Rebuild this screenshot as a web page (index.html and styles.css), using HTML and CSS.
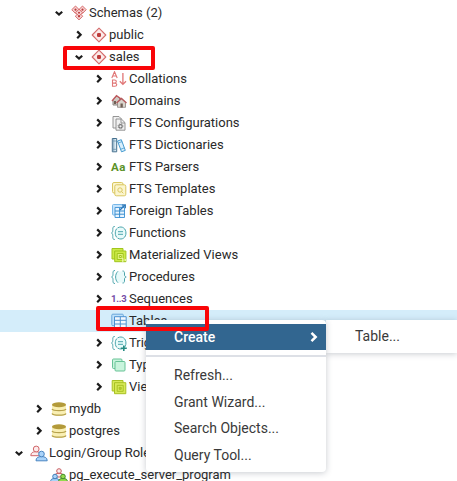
FILE: index.html
```html
<!DOCTYPE html>
<html lang="en">
<head>
<meta charset="utf-8">
<title>Object browser</title>
<link rel="stylesheet" href="styles.css">
</head>
<body>
<svg class="defs" aria-hidden="true">
  <symbol id="open" viewBox="0 0 10 16"><path d="M1.800 6.700 5 9.600l3.200-2.900" fill="none" stroke="#1c1c1c" stroke-width="2.200"/></symbol>
  <symbol id="closed" viewBox="0 0 10 16"><path d="M3.200 4.400 6.600 7.800l-3.400 3.400" fill="none" stroke="#1c1c1c" stroke-width="2.200"/></symbol>
  <symbol id="schemas" viewBox="0 0 16 16"><g fill="#f6d5d5" stroke="#d45c5c" stroke-width=".9"><path d="M4.500 1 8.200 4.700 4.500 8.400.8 4.700zM11.500 1l3.700 3.700-3.700 3.700-3.700-3.700zM8 7.500l3.700 3.700L8 14.900l-3.700-3.700z"/><path d="M8 4.200 11.500 7.700 8 11.200 4.500 7.700z"/></g><g fill="#bd3b3b"><circle cx="4.500" cy="4.700" r="1.100"/><circle cx="11.500" cy="4.700" r="1.100"/><circle cx="8" cy="7.700" r="1"/><circle cx="8" cy="11.300" r="1.100"/></g></symbol>
  <symbol id="schema" viewBox="0 0 16 16"><path d="M8 1.200 14.800 8 8 14.800 1.200 8z" fill="#fbe9e8" stroke="#d46b6b" stroke-width="1.100" stroke-linejoin="round"/><rect x="6" y="6" width="4" height="4" rx="1.200" fill="#bd3b3b"/></symbol>
  <symbol id="collation" viewBox="0 0 16 16"><g fill="none" stroke="#e07676" stroke-width="1.100"><path d="M.8 7 3.500.7 6.200 7M1.700 5h3.600M1.500 9v6.300h2.300c2.600 0 2.600-3.200 0-3.200H1.500h2.100c2.300 0 2.300-3.100 0-3.100z"/><path d="M11.900 2v11.300M8.800 10.200l3.100 3.200 3.100-3.200" stroke-width="1.300"/></g></symbol>
  <symbol id="domain" viewBox="0 0 16 16"><path d="M2 7v5h7V6L6 3z" fill="#cfcac4" stroke="#8b8580"/><path d="M1 8 5.500 2.600 11 6.500" fill="none" stroke="#c05a5e" stroke-width="1.400"/><path d="M6.500 9.300v5h8v-5l-4-3.500z" fill="#d9d4cd" stroke="#8b8580" stroke-width=".8"/><path d="m5.500 10 5-4.600 5 4.600" fill="none" stroke="#b65a5d" stroke-width="1.400"/><path d="M3 8h2v3H3zM9.500 10.500h2.300v4H9.500z" fill="#705f55"/></symbol>
  <symbol id="config" viewBox="0 0 16 16"><g fill="#f1f1f1" stroke="#8a8a8a" stroke-width=".9"><path d="M5 13H2V1.500h6l2 2V5"/><path d="M5 4h5.400L14 7.600v7.600H5z"/><path d="M10 4v4h4" fill="none"/></g><circle cx="9.500" cy="11.300" r="1.700" fill="none" stroke="#777" stroke-width="1.100"/><circle cx="9.500" cy="11.300" r="2.500" fill="none" stroke="#777" stroke-width=".8" stroke-dasharray="1 .96"/></symbol>
  <symbol id="dictionary" viewBox="0 0 16 16"><path d="M1.300 1.500h4.400v13.300H1.300z" fill="#dcebf4" stroke="#456f8d"/><path d="M1.300 4h4.400M1.300 12.300h4.400M2.800 2v12.500" stroke="#6b93ad" stroke-width=".8"/><path d="m6.500 4 3.800-1.300 4 10.700-3.800 1.400z" fill="#d9effc" stroke="#459bd0"/><path d="m7.300 6 3.800-1.400m-1.500 7.700 3.800-1.400" stroke="#459bd0" stroke-width=".8"/></symbol>
  <symbol id="template" viewBox="0 0 16 16"><g fill="#fbf5ce" stroke="#dac760"><rect x="1.500" y="1.500" width="10.500" height="10.500" rx="1.500"/><rect x="3.800" y="3.800" width="11" height="11" rx="1.500"/><circle cx="9" cy="9" r="2.200"/><path d="m10.600 10.600 1.700 1.700"/></g></symbol>
  <symbol id="foreign" viewBox="0 0 16 16"><rect x="1.500" y="1.500" width="10" height="10.500" rx="1" fill="#c6e4fc" stroke="#77b8e9"/><path d="M4 4.500h9.500v10H4z" fill="#e9f5ff" stroke="#4c9ad8"/><path d="M4 8h9.500M4 11.200h9.500M8.600 5v9.500" stroke="#398dcd"/><path d="M9 7 14 2M10.800 1.800h3.500v3.500" fill="none" stroke="#2f79b8" stroke-width="1.300"/></symbol>
  <symbol id="braces" viewBox="0 0 16 16"><path d="M6.500 2.500h6.300V8v5.500H6.500C4 11 4 5 6.500 2.500z" fill="#e8fafa"/><g fill="none" stroke="#4aa5ac"><path d="M4 1.500c-2 0-2 1-2 3S2 7.300.6 8C2 8.700 2 9.500 2 11.500s0 3 2 3M7 2.300c-3.200 2.800-3.200 8.600 0 11.400"/><path d="M11.500 2c2 0 2 1 2 3s0 2.300 1.700 3c-1.700.7-1.700 1-1.700 3s0 3-2 3"/></g></symbol>
  <symbol id="function" viewBox="0 0 16 16"><circle cx="9.500" cy="8" r="5.700" fill="#e8fafa"/><g fill="none" stroke="#4aa5ac"><path d="M3.800 1.500c-2 0-2 1-2 3S1.800 7.300.5 8c1.300.7 1.300 1.500 1.300 3.500s0 3 2 3M6.500 3C3.500 5 3.500 11 6.500 13M12.700 3c3 2 3 8 0 10"/><path d="M7 2.700c2-1 4-1 5.700.3M7 13.300c2 1 4 1 5.700-.3M7 6.700h5M7 9.300h5"/></g></symbol>
  <symbol id="trigger" viewBox="0 0 16 16"><use href="#function"/><path d="M9.800 13.300h6M12.800 10.500v5.500" stroke="#258b82" stroke-width="1.600"/></symbol>
  <symbol id="matview" viewBox="0 0 16 16"><g fill="#ccea48" stroke="#a1c51c"><path d="M1 1.500h11V12H1z"/><path d="M3.700 4h11.200v10.700H3.700z"/><path d="M6.200 6.500h6v6h-6z" fill="#e2f47d"/><path d="M8.300 8.500h2v2h-2z" fill="#f0f8ad"/></g><path d="M11.800 11v4M14.300 12v2" stroke="#f3f9c6"/></symbol>
  <symbol id="view" viewBox="0 0 16 16"><g fill="#d7e958" stroke="#a8c123"><path d="M1.200 1.500H12V12H1.200z"/><path d="M3.500 3.700h11.300v11H3.500z"/><path d="M6.200 6.300h6v6h-6z"/><path d="M8.200 8.300h2v2h-2z" fill="#bed02b"/></g></symbol>
  <symbol id="tables" viewBox="0 0 16 16"><rect x=".8" y="1.200" width="11.500" height="11.500" rx="1" fill="#bfe1fa" stroke="#68a6da"/><path d="M3.500 3.700h11.700v11H3.500z" fill="#f2f8ff" stroke="#4c92d0"/><path d="M3.500 7.300h11.700M3.500 11h11.700M9.300 3.700v11" stroke="#4c92d0"/></symbol>
  <symbol id="types" viewBox="0 0 16 16"><g fill="#c9f4dc" stroke="#68c397"><rect x="1.500" y="2" width="9.500" height="9.500" rx="1"/><rect x="4" y="4.500" width="10" height="9.500" rx="1"/></g></symbol>
  <symbol id="database" viewBox="0 0 16 16"><path d="M1 3.500v9.300c0 2.900 14 2.900 14 0V3.500" fill="#f9efb3"/><ellipse cx="8" cy="3.700" rx="7" ry="2.500" fill="#b39a3a"/><path d="M1 8c1 2.100 13 2.100 14 0M1 12.400c1 2.300 13 2.300 14 0" fill="none" stroke="#b6a14c" stroke-width="1.300"/></symbol>
  <symbol id="roles" viewBox="0 0 18 17"><g fill="#fcebec" stroke="#d16669"><path d="M.8 10.700c0-3 2-4 5-4s5 1 5 4z"/><circle cx="6.200" cy="4" r="2.900"/></g><g fill="#a9d3fa" stroke="#4a86c2"><path d="M6 15.800c0-3.200 2-4.200 5.500-4.200s5.700 1 5.700 4.200z"/><circle cx="11.500" cy="9" r="2.800"/></g></symbol>
  <symbol id="group" viewBox="0 0 18 17"><g fill="#fcebec" stroke="#c85d61"><path d="M4.500 10c0-3 1.200-3.700 4.500-3.700s4.500.7 4.500 3.700z"/><circle cx="9" cy="4" r="2.300"/></g><g fill="#a9d3fa" stroke="#427fb9"><path d="M.5 15.500c0-3.200 1.200-4 4.500-4s4.500.8 4.500 4z"/><circle cx="5" cy="9.500" r="2.300"/></g><g fill="#94da4d" stroke="#418b29"><path d="M8.500 15.500c0-3.200 1.200-4 4.500-4s4.500.8 4.500 4z"/><circle cx="13" cy="9.500" r="2.300"/></g></symbol>
</svg>
<main class="tree">
  <div class="row level-2"><svg class="arrow"><use href="#open"/></svg><svg class="icon"><use href="#schemas"/></svg><span>Schemas (2)</span></div>
  <div class="row level-3"><svg class="arrow"><use href="#closed"/></svg><svg class="icon"><use href="#schema"/></svg><span>public</span></div>
  <div class="row level-3"><svg class="arrow"><use href="#open"/></svg><svg class="icon"><use href="#schema"/></svg><span>sales</span></div>
  <div class="row level-4"><svg class="arrow"><use href="#closed"/></svg><svg class="icon"><use href="#collation"/></svg><span>Collations</span></div>
  <div class="row level-4"><svg class="arrow"><use href="#closed"/></svg><svg class="icon"><use href="#domain"/></svg><span>Domains</span></div>
  <div class="row level-4"><svg class="arrow"><use href="#closed"/></svg><svg class="icon"><use href="#config"/></svg><span>FTS Configurations</span></div>
  <div class="row level-4"><svg class="arrow"><use href="#closed"/></svg><svg class="icon"><use href="#dictionary"/></svg><span>FTS Dictionaries</span></div>
  <div class="row level-4"><svg class="arrow"><use href="#closed"/></svg><b class="icon parser">Aa</b><span>FTS Parsers</span></div>
  <div class="row level-4"><svg class="arrow"><use href="#closed"/></svg><svg class="icon"><use href="#template"/></svg><span>FTS Templates</span></div>
  <div class="row level-4"><svg class="arrow"><use href="#closed"/></svg><svg class="icon"><use href="#foreign"/></svg><span>Foreign Tables</span></div>
  <div class="row level-4"><svg class="arrow"><use href="#closed"/></svg><svg class="icon"><use href="#function"/></svg><span>Functions</span></div>
  <div class="row level-4"><svg class="arrow"><use href="#closed"/></svg><svg class="icon"><use href="#matview"/></svg><span>Materialized Views</span></div>
  <div class="row level-4"><svg class="arrow"><use href="#closed"/></svg><svg class="icon"><use href="#braces"/></svg><span>Procedures</span></div>
  <div class="row level-4"><svg class="arrow"><use href="#closed"/></svg><b class="icon sequence">1..3</b><span>Sequences</span></div>
  <div class="row level-4 selected"><i class="arrow"></i><svg class="icon"><use href="#tables"/></svg><span>Tables</span></div>
  <div class="row level-4"><svg class="arrow"><use href="#closed"/></svg><svg class="icon"><use href="#trigger"/></svg><span>Trigger</span></div>
  <div class="row level-4"><svg class="arrow"><use href="#closed"/></svg><svg class="icon"><use href="#types"/></svg><span>Types</span></div>
  <div class="row level-4"><svg class="arrow"><use href="#closed"/></svg><svg class="icon"><use href="#view"/></svg><span>Views</span></div>
  <div class="row level-1"><svg class="arrow"><use href="#closed"/></svg><svg class="icon"><use href="#database"/></svg><span>mydb</span></div>
  <div class="row level-1"><svg class="arrow"><use href="#closed"/></svg><svg class="icon"><use href="#database"/></svg><span>postgres</span></div>
  <div class="row level-0"><svg class="arrow"><use href="#open"/></svg><svg class="icon wide"><use href="#roles"/></svg><span>Login/Group Roles</span></div>
  <div class="row level-1"><i class="arrow"></i><svg class="icon wide"><use href="#group"/></svg><span>pg_execute_server_program</span></div>
</main>
<nav class="menu submenu"><div class="item">Table...</div></nav>
<nav class="menu context">
  <div class="item active"><span>Create</span><svg class="more" viewBox="0 0 8 12"><path d="m1.500 1.800 4.200 4.200-4.200 4.200" fill="none" stroke="#fff" stroke-width="2.500"/></svg></div>
  <hr>
  <div class="item">Refresh...</div>
  <div class="item">Grant Wizard...</div>
  <div class="item">Search Objects...</div>
  <div class="item">Query Tool...</div>
</nav>
<div class="mark mark-schema"></div>
<div class="mark mark-tables"></div>
</body>
</html>
```
FILE: styles.css
```css
* { box-sizing: border-box; }
html { overflow: hidden; }
body {
  margin: 0;
  height: 481px;
  position: relative;
  overflow: hidden;
  background: #fff;
  color: #2a2a2a;
  font: 13px/22px Roboto, sans-serif;
}
.defs { position: absolute; width: 0; height: 0; }
.tree { padding-top: 2px; }
.row { display: flex; align-items: center; height: 22px; white-space: nowrap; }
.selected { background: #d4edfa; }
.level-0 { padding-left: 14px; }
.level-1 { padding-left: 34px; }
.level-2 { padding-left: 54px; }
.level-3 { padding-left: 74px; }
.level-4 { padding-left: 94px; }
.arrow { flex: none; width: 10px; height: 16px; margin-right: 7px; }
.icon { flex: none; width: 16px; height: 16px; margin-right: 2px; }
.wide { width: 18px; height: 17px; margin: 0 1px 0 -1px; }
.parser { color: #5c9227; font-size: 11.5px; line-height: 17px; letter-spacing: .5px; }
.sequence { color: #744ca5; font-size: 9.5px; line-height: 16px; letter-spacing: -.2px; }
.menu { position: absolute; background: #fff; box-shadow: 0 1px 6px rgba(40, 50, 70, .25); }
.context { left: 146px; top: 320px; width: 180px; height: 152px; padding-top: 4px; border-radius: 4px; }
.submenu { left: 326px; top: 320px; width: 131px; height: 33px; padding-top: 3px; }
.item { display: flex; align-items: center; justify-content: space-between; height: 26.7px; padding: 0 8px 0 28px; font-size: 14px; color: #3a3a3a; }
.submenu .item { padding-left: 29px; }
.active { height: 26px; padding-bottom: 1px; background: #326690; color: #fff; font-weight: 500; }
.more { width: 8px; height: 12px; }
.menu hr { height: 2px; margin: 5px 0 4.6px; border: 0; background: #dde0e6; }
.mark { position: absolute; border: 4px solid #f90508; border-radius: 2px; }
.mark-schema { left: 63px; top: 46px; width: 92px; height: 24px; }
.mark-tables { left: 96px; top: 306px; width: 113px; height: 25px; }
```
